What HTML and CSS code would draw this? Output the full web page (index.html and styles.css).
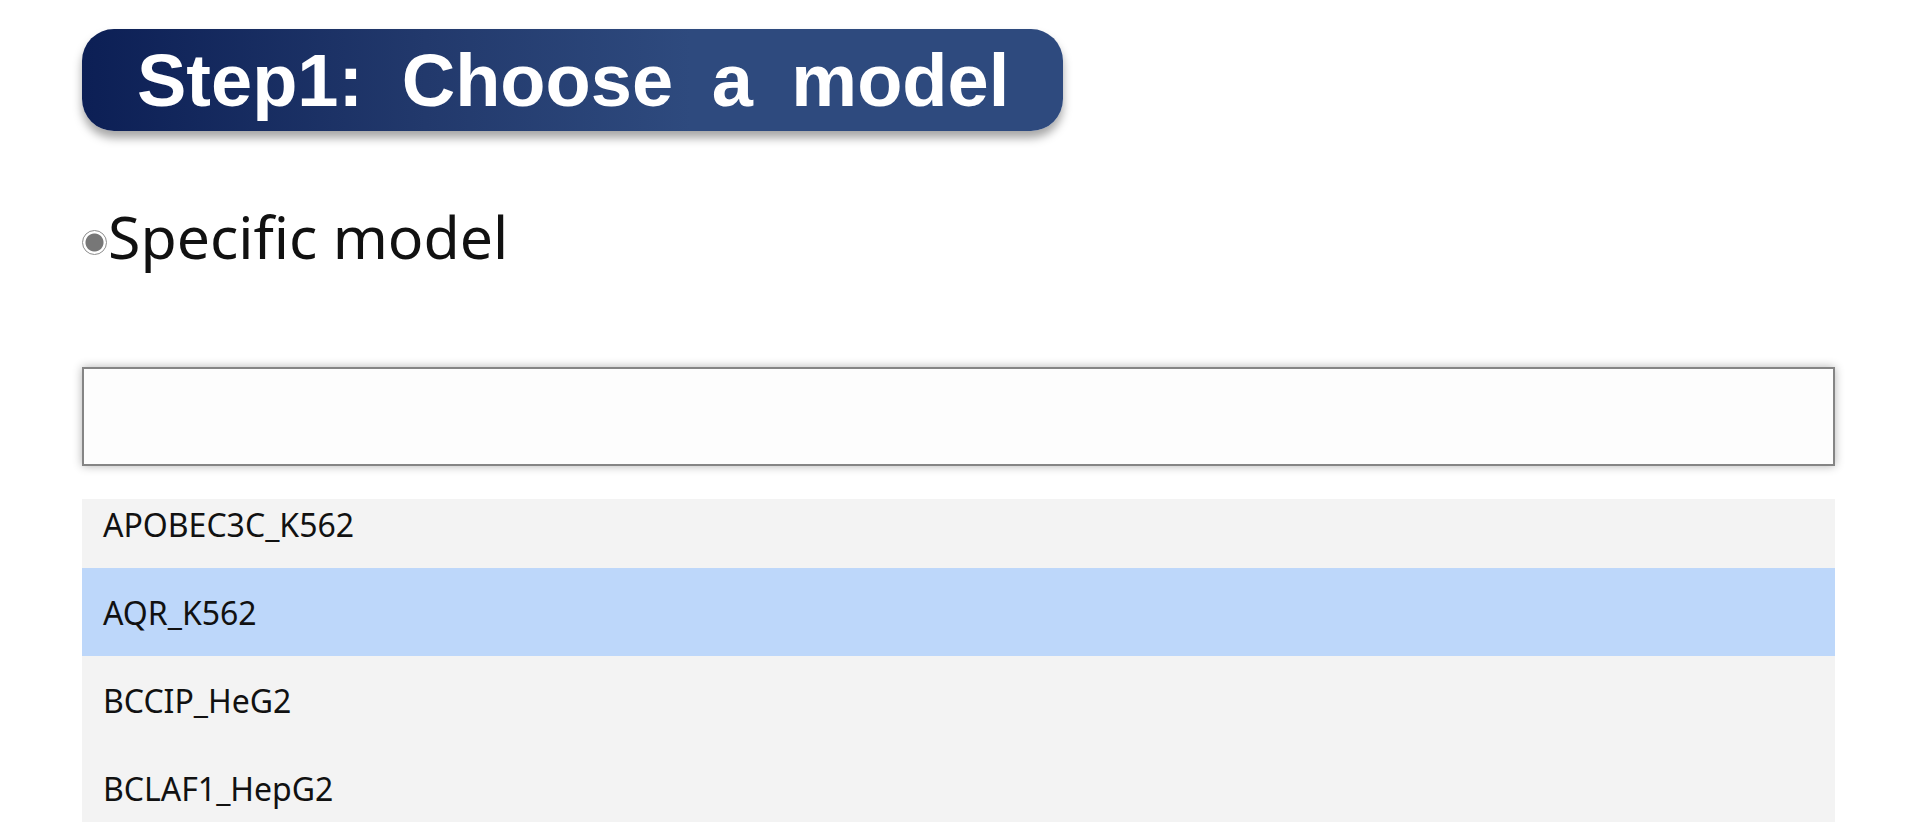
FILE: index.html
```html
<!DOCTYPE html>
<html lang="en">
<head>
    <meta charset="UTF-8">
    <meta name="viewport" content="width=device-width, initial-scale=1.0">
    <title>Choose a model</title>
    <link rel="stylesheet" href="styles.css">
</head>
<body>
    <div class="page">
        <h2 class="step-title">Step1: Choose a model</h2>

        <label class="model-choice">
            <span class="radio"></span>
            <span class="choice-text">Specific model</span>
        </label>

        <div class="search-box"></div>

        <div class="dropdown">
            <ul class="options">
                <li>APOBEC3C_K562</li>
                <li class="active">AQR_K562</li>
                <li>BCCIP_HeG2</li>
                <li>BCLAF1_HepG2</li>
                <li>BUD13_K562</li>
            </ul>
        </div>
    </div>
</body>
</html>
```

FILE: styles.css
```css
html, body {
    margin: 0;
    background-color: #ffffff;
    overflow: hidden;
}
.page {
    display: flex;
    flex-direction: column;
    align-items: flex-start;
    padding: 29px 81px 0 82px;
    font-family: "Noto Sans", sans-serif;
}
.step-title {
    margin: 0;
    height: 102px;
    padding: 0 54px 0 55px;
    display: flex;
    align-items: center;
    border-radius: 32px;
    background: linear-gradient(90deg, #0c1f55 0%, #22396c 35%, #2e4a7e 62%, #2e4a7e 100%);
    box-shadow: 0 7px 10px rgba(0, 0, 0, 0.35);
    color: #ffffff;
    font-family: "Liberation Sans", Arial, sans-serif;
    font-weight: bold;
    font-size: 74px;
    word-spacing: 18px;
    white-space: nowrap;
}
.model-choice {
    display: flex;
    align-items: center;
    margin-top: 65px;
    height: 80px;
}
.radio {
    width: 23px;
    height: 23px;
    border: 1.5px solid #8d8d8d;
    border-radius: 50%;
    background: radial-gradient(circle, #777777 0 8.5px, #ffffff 9.5px);
    margin-top: 12px;
    flex-shrink: 0;
}
.choice-text {
    font-size: 59px;
    line-height: 1;
    color: #111111;
    margin-left: 1px;
}
.search-box {
    align-self: stretch;
    margin-top: 91px;
    height: 95px;
    border: 2px solid #858585;
    background-color: #fdfdfd;
    box-shadow: 0 0 9px rgba(0, 0, 0, 0.3);
}
.dropdown {
    align-self: stretch;
    margin-top: 33px;
    height: 330px;
    overflow: hidden;
    background-color: #f3f3f3;
}
.options {
    list-style: none;
    margin: -19px 0 0 0;
    padding: 0;
}
.options li {
    height: 88px;
    display: flex;
    align-items: center;
    padding-left: 21px;
    font-size: 32px;
    color: #111111;
}
.options li.active {
    background-color: #bdd7fa;
}
```
